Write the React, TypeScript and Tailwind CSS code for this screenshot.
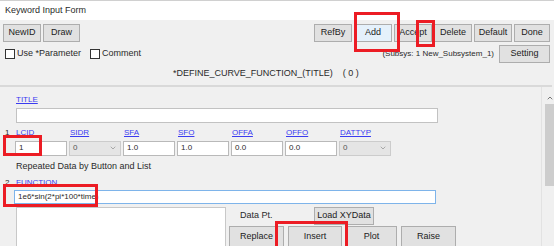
import { ChevronDown, ChevronUp } from "lucide-react";

const btn =
  "h-[18px] flex items-center justify-center whitespace-nowrap bg-[#e1e1e1] border border-[#adadad] text-[9px] text-[#222]";

function Btn({ label, w, active }: { label: string; w: string; active?: boolean }) {
  return (
    <div
      className={`${btn} ${w} ${active ? "border-[#0078d7] bg-[#e5f1fb]" : ""}`}
    >
      {label}
    </div>
  );
}

function Check({ label }: { label: string }) {
  return (
    <div className="flex items-center gap-[2px]">
      <div className="w-[10px] h-[10px] bg-white border border-[#333]" />
      <span>{label}</span>
    </div>
  );
}

function Field({ value, select }: { value: string; select?: boolean }) {
  return (
    <div
      className={`w-[52px] h-[15px] border flex items-center pl-[3px] text-[8px] ${
        select ? "bg-[#e5e5e5] border-[#cccccc] text-[#555] justify-between pr-[3px]" : "bg-white border-[#b9b9b9]"
      }`}
    >
      <span>{value}</span>
      {select && <ChevronDown size={8} className="text-[#888]" />}
    </div>
  );
}

const cols = ["LCID", "SIDR", "SFA", "SFO", "OFFA", "OFFO", "DATTYP"];
const vals = ["1", "0", "1.0", "1.0", "0.0", "0.0", "0"];

function RedBox({ cls }: { cls: string }) {
  return <div className={`absolute border-[3px] border-[#ec1c24] ${cls}`} />;
}

export default function App() {
  return (
    <div
      className="relative w-[554px] h-[246px] overflow-hidden bg-[#f0f0f0] text-[9px] text-[#2a2a2a]"
      style={{ fontFamily: '"Liberation Sans", Arial, sans-serif' }}
    >
      {/* window title */}
      <div className="h-[20px] bg-white flex items-center pl-[5px] border-t border-[#d0d0d0]">
        Keyword Input Form
      </div>

      {/* toolbar */}
      <div className="h-[24px] flex items-center justify-between px-[3px] pt-[2px]">
        <div className="flex gap-[2px]">
          <Btn label="NewID" w="w-[38px]" />
          <Btn label="Draw" w="w-[37px]" />
        </div>
        <div className="flex gap-[2px] pr-[1px]">
          <Btn label="RefBy" w="w-[38px]" />
          <Btn label="Add" w="w-[38px]" active />
          <Btn label="Accept" w="w-[38px]" />
          <Btn label="Delete" w="w-[38px]" />
          <Btn label="Default" w="w-[38px]" />
          <Btn label="Done" w="w-[36px]" />
        </div>
      </div>

      <div className="h-[20px] flex items-center justify-between pl-[5px] pr-[4px]">
        <div className="flex gap-[9px]">
          <Check label="Use *Parameter" />
          <Check label="Comment" />
        </div>
        <div className="flex items-center gap-[5px]">
          <span className="text-[8px]">(Subsys: 1 New_Subsystem_1)</span>
          <Btn label="Setting" w="w-[51px]" />
        </div>
      </div>

      <div className="h-[20px] flex items-center pl-[173px]">
        *DEFINE_CURVE_FUNCTION_(TITLE)&nbsp;&nbsp;&nbsp;&nbsp;( 0 )
      </div>

      <div className="h-[2px] bg-[#d9d9d9] mr-[2px] mt-[1px]" />

      <div className="flex h-[160px]">
        {/* form body */}
        <div className="flex-1 flex flex-col border-r border-[#e2e2e2] mr-[3px]">
          <div className="pl-[16px] pt-[6px] h-[22px]">
            <span className="text-[#3b3bf0] underline text-[8px]">TITLE</span>
          </div>
          <div className="pl-[16px] mt-[1px]">
            <div className="w-[422px] h-[15px] bg-white border border-[#c2c2c2]" />
          </div>

          <div className="flex pl-[5px] mt-[4px] h-[12px] items-center text-[8px]">
            <span className="w-[11px]">1</span>
            <div className="flex gap-[2px]">
              {cols.map((c) => (
                <span key={c} className="w-[52px] text-[#3b3bf0] underline">
                  {c}
                </span>
              ))}
            </div>
          </div>
          <div className="flex gap-[2px] pl-[15px] mt-[2px]">
            {vals.map((v, i) => (
              <Field key={cols[i]} value={v} select={i === 1 || i === 6} />
            ))}
          </div>

          <div className="pl-[16px] mt-[5px] h-[12px] flex items-center">Repeated Data by Button and List</div>
          <div className="h-[2px] bg-[#d9d9d9] ml-[5px] mt-[1px]" />

          <div className="flex pl-[5px] mt-[3px] h-[12px] items-center text-[8px]">
            <span className="w-[11px]">2</span>
            <span className="text-[#3b3bf0] underline">FUNCTION</span>
          </div>
          <div className="pl-[14px] mt-[1px]">
            <div className="w-[422px] h-[14px] bg-white border border-[#7eb4ea] flex items-center pl-[3px] text-[8px]">
              1e6*sin(2*pi*100*time)
            </div>
          </div>

          <div className="flex pl-[16px] mt-[3px] flex-1">
            <div className="w-[210px] bg-white border border-[#c8c8c8] border-b-0" />
            <div className="flex flex-col ml-[3px]">
              <div className="flex items-center h-[19px]">
                <span className="ml-[11px] w-[74px]">Data Pt.</span>
                <Btn label="Load XYData" w="w-[60px]" />
              </div>
              <div className="flex gap-[4px]">
                <Btn label="Replace" w="w-[55px] h-[22px]" />
                <Btn label="Insert" w="w-[54px] h-[22px]" />
                <Btn label="Plot" w="w-[51px] h-[22px]" />
                <Btn label="Raise" w="w-[55px] h-[22px]" />
              </div>
            </div>
          </div>
        </div>

        {/* scrollbar */}
        <div className="w-[9px] flex flex-col items-center pt-[7px]">
          <ChevronUp size={8} strokeWidth={3} className="text-[#777]" />
          <div className="w-[9px] h-[82px] bg-[#cdcdcd] mt-[2px]" />
        </div>
      </div>

      {/* annotation boxes */}
      <RedBox cls="left-[354px] top-[12px] w-[46px] h-[40px]" />
      <RedBox cls="left-[416px] top-[20px] w-[19px] h-[27px]" />
      <RedBox cls="left-[3px] top-[135px] w-[39px] h-[21px]" />
      <RedBox cls="left-[3px] top-[184px] w-[95px] h-[23px]" />
      <RedBox cls="left-[275px] top-[221px] w-[73px] h-[30px]" />
    </div>
  );
}
